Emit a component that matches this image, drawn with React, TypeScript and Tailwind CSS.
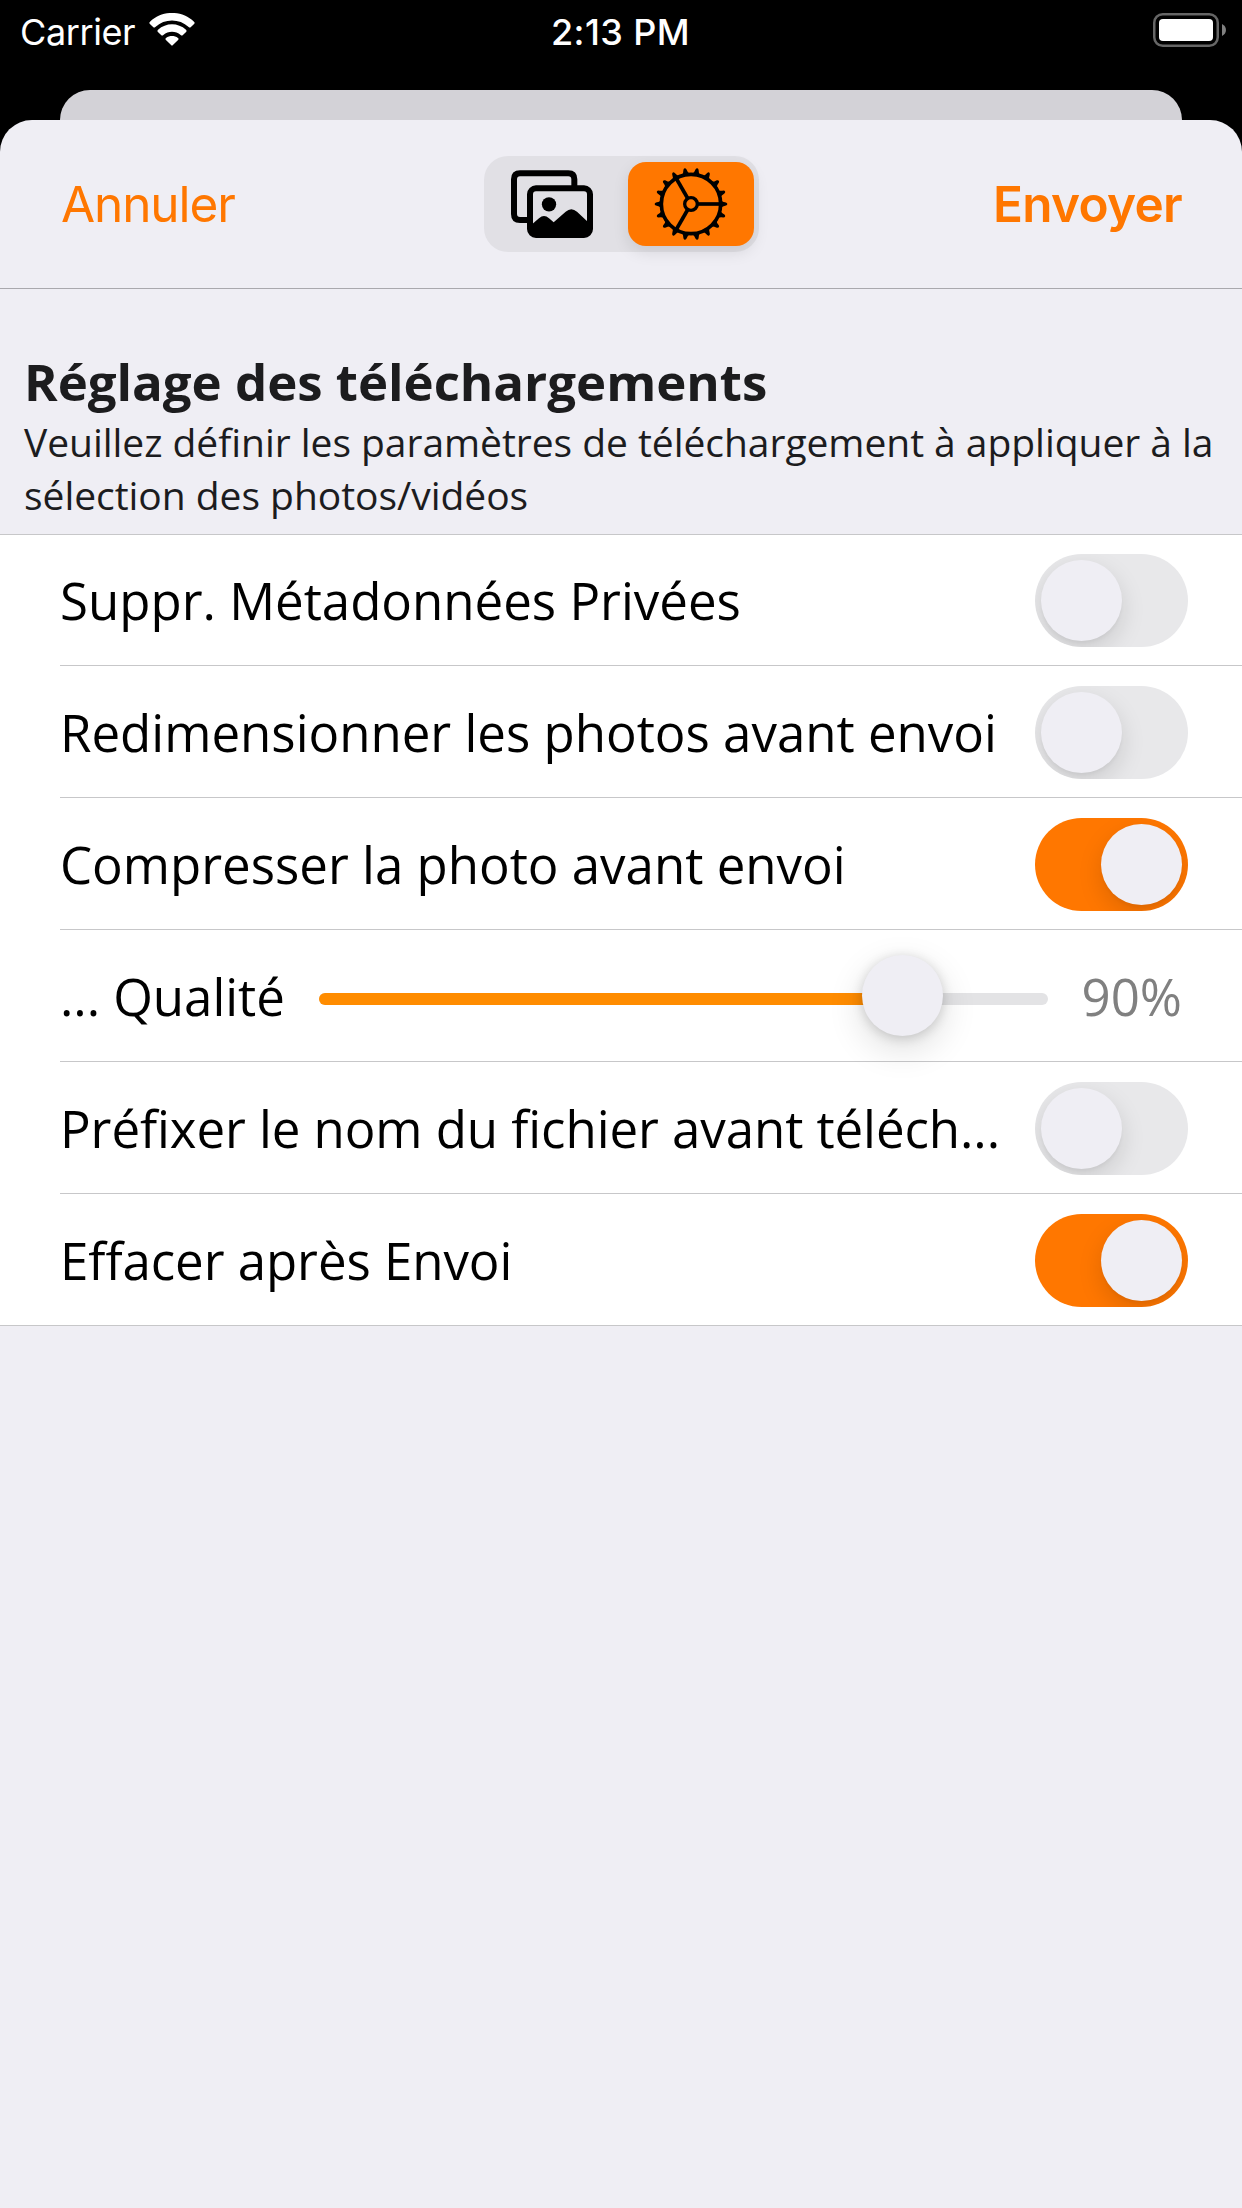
import React from "react";

const labelText = "font-['Open_Sans',sans-serif] text-[51px] leading-[70px] whitespace-nowrap pb-px";

function WifiIcon() {
  return (
    <svg className="h-[34px] w-[46px]" viewBox="0 0 138 102" fill="#fff">
      <path d="M2 32 Q0 29 3 26 C39 -9 99 -9 135 26 Q138 29 136 32 L125 43 Q122 45 119 42 C91 16 47 16 19 42 Q16 45 13 43 Z" />
      <path d="M26 56 Q24 53 27 50 C51 28 87 28 111 50 Q114 53 112 56 L101 67 Q98 69 95 66 C80 53 58 53 43 66 Q40 69 37 67 Z" />
      <path d="M50 80 Q48 77 51 75 C62 67 76 67 87 75 Q90 77 88 80 L71 97 Q69 99 67 97 Z" />
    </svg>
  );
}

function BatteryIcon() {
  return (
    <svg className="h-[34px] w-[73px]" viewBox="0 0 73 34">
      <rect x="1.25" y="1.25" width="63.5" height="31.5" rx="8.5" fill="none" stroke="#666" strokeWidth="2.5" />
      <rect x="6" y="6" width="54" height="22" rx="4" fill="#fff" />
      <path d="M69 11 C74.3 13.5 74.3 20.5 69 23 Z" fill="#808080" />
    </svg>
  );
}

function PhotosIcon() {
  return (
    <svg className="h-[70px] w-[84px]" viewBox="120 87 252 210">
      <path d="M178 240 H150 Q132 240 132 222 V118 Q132 100 150 100 H295 Q313 100 313 118 V142" fill="none" stroke="#000" strokeWidth="18" />
      <rect x="180" y="145" width="180" height="140" rx="18" fill="none" stroke="#000" strokeWidth="18" />
      <circle cx="237" cy="193" r="21.5" />
      <path d="M180 258 L207 235 Q222 221 237 235 L251 247 L287 215 Q304 200 321 215 L358 250 V286 H182 Z" />
    </svg>
  );
}

function GearIcon() {
  const teeth = Array.from({ length: 18 }, (_, i) => i * 20);
  const spokes = [0, 120, 240];
  return (
    <svg className="size-[74px]" viewBox="-111 -111 222 222">
      <circle r="89" fill="none" stroke="#000" strokeWidth="11" />
      <circle r="19" fill="none" stroke="#000" strokeWidth="10" />
      {teeth.map((a) => (
        <path key={a} d="M88 -13 Q95 -6 105 -4.5 Q109 -3 109 0 Q109 3 105 4.5 Q95 6 88 13 Z" transform={`rotate(${a})`} />
      ))}
      {spokes.map((a) => (
        <path key={a} d="M20 0 H90" stroke="#000" strokeWidth="11" transform={`rotate(${a})`} />
      ))}
    </svg>
  );
}

function Toggle({ on = false }: { on?: boolean }) {
  return (
    <div
      className={
        on
          ? "flex h-[93px] w-[153px] shrink-0 justify-end overflow-hidden rounded-full bg-[#ff7700] p-[6px]"
          : "flex h-[93px] w-[153px] shrink-0 justify-start overflow-hidden rounded-full bg-[#e8e8ea] p-[6px]"
      }
    >
      <div className="size-[81px] rounded-full bg-[#efeef4] shadow-[0_9px_24px_rgba(0,0,0,0.13),0_3px_3px_rgba(0,0,0,0.03)]" />
    </div>
  );
}

const rowStyles = {
  first: "ml-[60px] flex h-[131px] items-center border-b border-[#c7c7c9] pt-px pr-[54px]",
  middle: "ml-[60px] flex h-[132px] items-center border-b border-[#c7c7c9] pt-[2px] pr-[54px]",
  last: "ml-[60px] flex h-[131px] items-center pt-[2px] pr-[54px]",
};

type Place = keyof typeof rowStyles;

function Row({ children, place = "middle" }: { children: React.ReactNode; place?: Place }) {
  return <div className={rowStyles[place]}>{children}</div>;
}

function ToggleRow({ label, on, place, tracking = "" }: { label: string; on?: boolean; place?: Place; tracking?: string }) {
  return (
    <Row place={place}>
      <span className={`${labelText} min-w-0 flex-1 ${tracking}`}>{label}</span>
      <Toggle on={on} />
    </Row>
  );
}

export default function App() {
  return (
    <div className="flex h-[2208px] w-[1242px] flex-col overflow-hidden bg-black text-black">
      <header className="grid h-[90px] grid-cols-3 px-[20px] font-['Inter',sans-serif] text-[36px] leading-[44px] text-white">
        <div className="flex items-start pt-[10px]">
          <span className="w-[129px] text-[36px] tracking-[-0.4px]">Carrier</span>
          <span className="pt-[3px]"><WifiIcon /></span>
        </div>
        <div className="pt-[10px] pr-px text-center font-medium tracking-[0.4px] whitespace-nowrap">2:13 PM</div>
        <div className="-mr-[4px] flex items-start justify-end pt-[13px]"><BatteryIcon /></div>
      </header>

      <div className="mx-[60px] h-[30px] shrink-0 rounded-t-[30px] bg-[#d3d2d7]" />

      <main className="flex-1 rounded-t-[32px] bg-[#efeef4]">
        <nav className="grid h-[169px] grid-cols-[1fr_275px_1fr] items-center border-b border-[#a9a8ad] px-[60px] font-['Inter',sans-serif] text-[49.5px] text-[#ff7700]">
          <span className="pl-px tracking-[-1.1px]">Annuler</span>
          <div className="flex h-[96px] items-center justify-between rounded-[24px] bg-[#e1e0e5] pr-[5px] pl-[26px]">
            <PhotosIcon />
            <div className="flex h-[84px] w-[126px] items-center justify-center rounded-[18px] bg-[#ff7700] shadow-[0_6px_16px_rgba(0,0,0,0.1)]">
              <GearIcon />
            </div>
          </div>
          <span className="text-right font-semibold tracking-[-0.7px]">Envoyer</span>
        </nav>

        <section className="h-[245px] pt-[58px] pl-[24px] font-['Open_Sans',sans-serif] text-[#1c1c1e]">
          <h1 className="text-[51px] leading-[68px] font-bold tracking-[-0.03px] whitespace-nowrap">Réglage des téléchargements</h1>
          <p className="text-[39px] leading-[53px] tracking-[-0.042px] whitespace-nowrap">
            Veuillez définir les paramètres de téléchargement à appliquer à la
            <br />
            sélection des photos/vidéos
          </p>
        </section>

        <section className="border-y border-[#c7c7c9] bg-white">
          <ToggleRow label="Suppr. Métadonnées Privées" place="first" />
          <ToggleRow label="Redimensionner les photos avant envoi" />
          <ToggleRow label="Compresser la photo avant envoi" on />
          <Row>
            <span className={`${labelText} w-[259px] shrink-0 tracking-[-0.05px]`}>... Qualité</span>
            <div className="relative flex h-[12px] w-[729px] shrink-0 translate-y-[2px] rounded-full bg-[#e3e3e5]">
              <div className="w-[584px] rounded-l-full bg-[#ff8c00]" />
              <div className="absolute top-[-38px] left-[543px] size-[81px] rounded-full bg-[#efeef4] shadow-[0_12px_36px_rgba(0,0,0,0.14),0_2px_12px_rgba(0,0,0,0.16)]" />
            </div>
            <span className={`${labelText} flex-1 pr-[6px] text-right text-[#808080]`}>90%</span>
          </Row>
          <ToggleRow label="Préfixer le nom du fichier avant téléch..." tracking="tracking-[-0.07px]" />
          <ToggleRow label="Effacer après Envoi" on place="last" tracking="tracking-[-0.06px]" />
        </section>
      </main>
    </div>
  );
}
